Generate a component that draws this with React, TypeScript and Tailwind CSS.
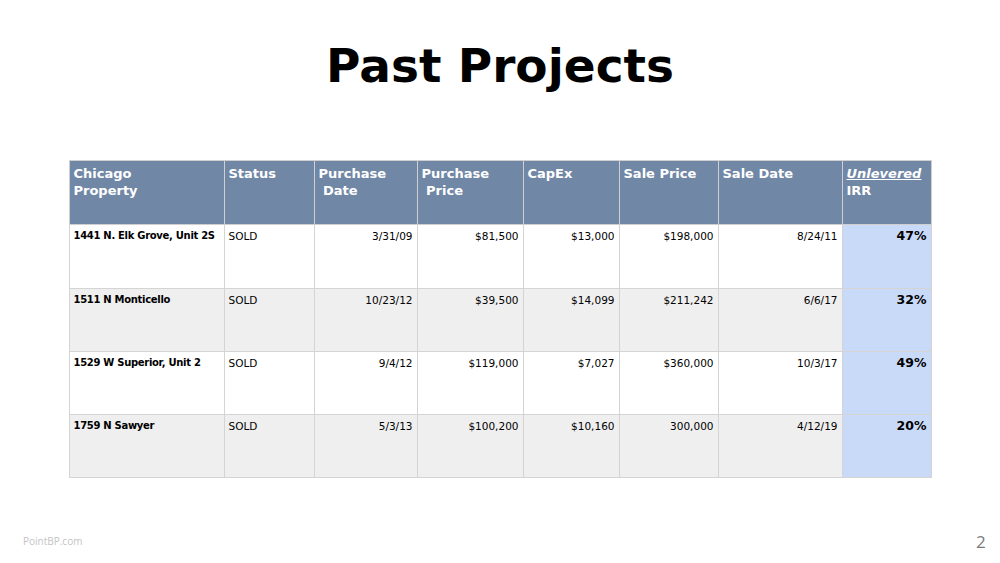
import React from "react";

const rows = [
  { p: "1441 N. Elk Grove, Unit 2S", d: "3/31/09", pp: "$81,500", c: "$13,000", sp: "$198,000", sd: "8/24/11", irr: "47%", gray: false, h: "h-[64px]" },
  { p: "1511 N Monticello", d: "10/23/12", pp: "$39,500", c: "$14,099", sp: "$211,242", sd: "6/6/17", irr: "32%", gray: true, h: "h-[63px]" },
  { p: "1529 W Superior, Unit 2", d: "9/4/12", pp: "$119,000", c: "$7,027", sp: "$360,000", sd: "10/3/17", irr: "49%", gray: false, h: "h-[63px]" },
  { p: "1759 N Sawyer", d: "5/3/13", pp: "$100,200", c: "$10,160", sp: "300,000", sd: "4/12/19", irr: "20%", gray: true, h: "h-[63px]" },
];

const font = { fontFamily: '"DejaVu Sans", "Open Sans", sans-serif' };

export default function App() {
  const th = "border border-[#cfcfcf] align-top text-left px-[4px] pt-[4px] text-white font-bold text-[13px] leading-[17px] whitespace-pre";
  const td = "border border-[#d4d4d4] align-top pt-[4px] px-[4px] text-[10.5px] leading-[14px] text-black";
  return (
    <div className="w-[1000px] h-[563px] bg-white relative overflow-hidden" style={font}>
      <div className="flex flex-col items-center">
        <h1 className="mt-[38px] text-[47px] leading-[56px] font-bold text-black">Past Projects</h1>
        <table className="mt-[66px] table-fixed border-collapse w-[862px]">
          <colgroup>
            <col className="w-[155px]" />
            <col className="w-[90px]" />
            <col className="w-[103px]" />
            <col className="w-[106px]" />
            <col className="w-[96px]" />
            <col className="w-[99px]" />
            <col className="w-[124px]" />
            <col className="w-[89px]" />
          </colgroup>
          <thead>
            <tr className="h-[64px] bg-[#7187a6]">
              <th className={th}>{"Chicago\nProperty"}</th>
              <th className={th}>Status</th>
              <th className={th}>{"Purchase\n Date"}</th>
              <th className={th}>{"Purchase\n Price"}</th>
              <th className={th}>CapEx</th>
              <th className={th}>Sale Price</th>
              <th className={th}>Sale Date</th>
              <th className={th}>
                <span className="italic underline">Unlevered</span>
                {"\nIRR"}
              </th>
            </tr>
          </thead>
          <tbody>
            {rows.map((r, i) => (
              <tr key={i} className={`${r.h} ${r.gray ? "bg-[#efefef]" : "bg-white"}`}>
                <td className={`${td} font-bold whitespace-nowrap text-[10px] tracking-[-0.3px]`}>{r.p}</td>
                <td className={td}>SOLD</td>
                <td className={`${td} text-right`}>{r.d}</td>
                <td className={`${td} text-right`}>{r.pp}</td>
                <td className={`${td} text-right`}>{r.c}</td>
                <td className={`${td} text-right`}>{r.sp}</td>
                <td className={`${td} text-right`}>{r.sd}</td>
                <td className={`${td} text-right bg-[#c9daf8] font-bold text-[12.5px]`}>{r.irr}</td>
              </tr>
            ))}
          </tbody>
        </table>
      </div>
      <div className="absolute left-[23px] top-[534px] text-[10px] text-[#c4c4c4]" style={{ fontFamily: '"Open Sans", sans-serif' }}>PointBP.com</div>
      <div className="absolute left-[976px] top-[529px] text-[17px] text-[#7a7a7a]" style={{ fontFamily: '"Open Sans", sans-serif' }}>2</div>
    </div>
  );
}
